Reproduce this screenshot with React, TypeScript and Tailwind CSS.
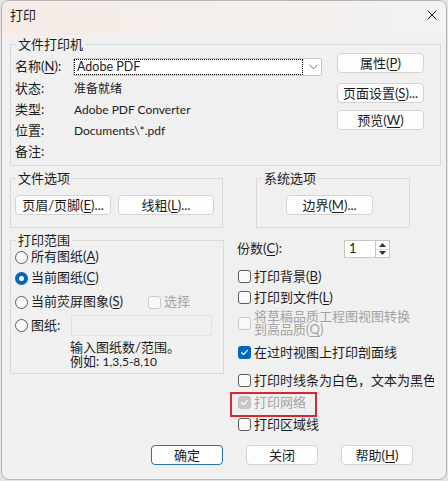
import type { ReactNode } from "react";

const FONT = "font-['Lato','Noto_Sans_CJK_SC',sans-serif]";

function U({ c }: { c: string }) {
  return <span className="underline underline-offset-[2px] decoration-[1px]">{c}</span>;
}

function Btn({ children, className = "", primary = false }: { children: ReactNode; className?: string; primary?: boolean }) {
  return (
    <div
      className={`flex h-[20px] items-center justify-center rounded-[4px] border bg-[#fdfdfd] text-[13px] leading-none text-[#1b1b1b] ${
        primary ? "border-[#2a6fb0]" : "border-[#d3d3d3]"
      } ${className}`}
    >
      {children}
    </div>
  );
}

function Check({ checked = false, disabled = false }: { checked?: boolean; disabled?: boolean }) {
  if (checked) {
    return (
      <div className={`flex h-[13px] w-[13px] shrink-0 items-center justify-center rounded-[3px] ${disabled ? "bg-[#c6c6c6]" : "bg-[#0067c0]"}`}>
        <svg width="9" height="9" viewBox="0 0 9 9" fill="none">
          <path d="M1.6 4.7 L3.6 6.6 L7.4 2.4" stroke="white" strokeWidth="1.2" strokeLinecap="round" strokeLinejoin="round" />
        </svg>
      </div>
    );
  }
  return (
    <div
      className={`h-[13px] w-[13px] shrink-0 rounded-[3px] border bg-[#f9f9f9] ${disabled ? "border-[#c9c9c9]" : "border-[#5c5c5c]"}`}
    />
  );
}

function Radio({ checked = false }: { checked?: boolean }) {
  if (checked) {
    return (
      <div className="flex h-[13px] w-[13px] shrink-0 items-center justify-center rounded-full bg-[#0067c0]">
        <div className="h-[5px] w-[5px] rounded-full bg-white" />
      </div>
    );
  }
  return <div className="h-[13px] w-[13px] shrink-0 rounded-full border border-[#5c5c5c] bg-[#f9f9f9]" />;
}

function Group({ title, className = "", children }: { title: string; className?: string; children: ReactNode }) {
  return (
    <fieldset className={`shrink-0 border border-[#d9d9d9] ${className}`}>
      <legend className="ml-[1px] px-[2px] text-[13px] leading-[16px] text-[#1b1b1b]">{title}</legend>
      {children}
    </fieldset>
  );
}

const INFO = [
  ["状态:", "准备就绪"],
  ["类型:", "Adobe PDF Converter"],
  ["位置:", "Documents\\*.pdf"],
  ["备注:", ""],
];

export default function App() {
  return (
    <div className={`h-[481px] w-[448px] bg-[#e4e4e4] ${FONT} text-[13px] text-[#1b1b1b]`}>
      <div className="ml-[1px] flex h-[480px] w-[446px] flex-col overflow-hidden rounded-[8px] border border-[#b4b4b4] bg-[#f0f0f0]">
        {/* title bar */}
        <div className="flex h-[34px] shrink-0 items-start justify-between bg-linear-to-r from-[#f7ebe5] via-[#f4efec] to-[#f2f2f2]">
          <span className="pl-[8px] pt-[6px] text-[13px] leading-[16px]">打印</span>
          <svg className="mr-[9px] mt-[9px]" width="10" height="10" viewBox="0 0 10 10">
            <path d="M0.5 0.5 L9.5 9.5 M9.5 0.5 L0.5 9.5" stroke="#1b1b1b" strokeWidth="1" />
          </svg>
        </div>

        {/* printer group */}
        <Group title="文件打印机" className="ml-[8px] mt-[1px] h-[130px] w-[431px] pl-[4px]">
          <div className="flex">
            <div className="flex w-[322px] flex-col">
              <div className="mt-[6px] flex h-[18px] items-center">
                <span className="w-[58px]">
                  名称(<U c="N" />):
                </span>
                <div className="flex h-[18px] w-[249px] items-center rounded-[2px] border border-[#c6c6c6] bg-white">
                  <div className="flex h-full w-[229px] items-center border border-dotted border-black pl-[2px] text-[12.5px]">Adobe PDF</div>
                  <svg className="ml-[6px]" width="9" height="6" viewBox="0 0 9 6">
                    <path d="M0.5 0.8 L4.5 4.8 L8.5 0.8" stroke="#6b6b6b" fill="none" strokeWidth="1" />
                  </svg>
                </div>
              </div>
              <div className="mt-[2px] flex flex-col">
                {INFO.map(([k, v]) => (
                  <div key={k} className="flex h-[21px] items-center">
                    <span className="w-[59px]">{k}</span>
                    <span className="text-[12px]">{v}</span>
                  </div>
                ))}
              </div>
            </div>
            <div className="mt-[1px] flex flex-col">
              <Btn className="w-[87px]">
                属性(<U c="P" />)
              </Btn>
              <Btn className="mt-[10px] w-[87px]">
                页面设置(<U c="S" />)...
              </Btn>
              <Btn className="mt-[7px] w-[87px]">
                预览(<U c="W" />)
              </Btn>
            </div>
          </div>
        </Group>

        {/* option groups */}
        <div className="mt-[4px] flex">
          <Group title="文件选项" className="ml-[8px] h-[58px] w-[213px] pl-[4px]">
            <div className="mt-[9px] flex">
              <Btn className="w-[96px]">
                页眉/页脚(<U c="E" />)...
              </Btn>
              <Btn className="ml-[7px] w-[96px]">
                线粗(<U c="L" />)...
              </Btn>
            </div>
          </Group>
          <Group title="系统选项" className="ml-[33px] h-[58px] w-[154px] pl-[4px]">
            <div className="mt-[9px] flex pl-[25px]">
              <Btn className="w-[87px]">
                边界(<U c="M" />)...
              </Btn>
            </div>
          </Group>
        </div>

        {/* range + right column */}
        <div className="mt-[4px] flex">
          <Group title="打印范围" className="ml-[8px] h-[142px] w-[214px] pl-[4px]">
            <div className="flex flex-col">
              <div className="flex h-[18px] items-center gap-[3px]">
                <Radio />
                <span>
                  所有图纸(<U c="A" />)
                </span>
              </div>
              <div className="mt-[3px] flex h-[18px] items-center gap-[3px]">
                <Radio checked />
                <span>
                  当前图纸(<U c="C" />)
                </span>
              </div>
              <div className="mt-[6px] flex h-[18px] items-center">
                <Radio />
                <span className="ml-[3px] w-[117px]">
                  当前荧屏图象(<U c="S" />)
                </span>
                <Check disabled />
                <span className="ml-[3px] text-[#a3a3a3]">选择</span>
              </div>
              <div className="mt-[4px] flex h-[21px] items-center">
                <Radio />
                <span className="ml-[3px] w-[40px]">图纸:</span>
                <div className="h-[21px] w-[141px] border border-[#e2e2e2] bg-[#f0f0f0]" />
              </div>
              <div className="ml-[55px] mt-[4px] flex flex-col leading-[14px]">
                <span>输入图纸数/范围。</span>
                <span>
                  例如: <span className="text-[12px]">1,3,5-8,10</span>
                </span>
              </div>
            </div>
          </Group>

          <div className="ml-[13px] flex flex-col">
            <div className="mt-[8px] flex h-[18px] items-center">
              <span className="w-[107px]">
                份数(<U c="C" />):
              </span>
              <div className="flex h-[18px] w-[46px] border border-[#c6c6c6] bg-white">
                <span className="flex w-[30px] items-center pl-[4px]">1</span>
                <div className="flex flex-1 flex-col border-l border-[#c6c6c6]">
                  <div className="flex flex-1 items-center justify-center border-b border-[#dcdcdc]">
                    <svg width="7" height="4" viewBox="0 0 7 4">
                      <path d="M0 4 L3.5 0 L7 4 Z" fill="#333" />
                    </svg>
                  </div>
                  <div className="flex flex-1 items-center justify-center">
                    <svg width="7" height="4" viewBox="0 0 7 4">
                      <path d="M0 0 L3.5 4 L7 0 Z" fill="#333" />
                    </svg>
                  </div>
                </div>
              </div>
            </div>

            <div className="ml-[1px] mt-[8px] flex flex-col">
              <div className="flex h-[21px] items-center gap-[3px]">
                <Check />
                <span>
                  打印背景(<U c="B" />)
                </span>
              </div>
              <div className="flex h-[21px] items-center gap-[3px]">
                <Check />
                <span>
                  打印到文件(<U c="L" />)
                </span>
              </div>
              <div className="mt-[2px] flex items-center gap-[3px] text-[#a3a3a3]">
                <Check disabled />
                <div className="flex flex-col leading-[13px]">
                  <span>将草稿品质工程图视图转换</span>
                  <span>
                    到高品质(<U c="Q" />)
                  </span>
                </div>
              </div>
              <div className="mt-[6px] flex h-[21px] items-center gap-[3px]">
                <Check checked />
                <span>在过时视图上打印剖面线</span>
              </div>
              <div className="mt-[7px] flex h-[21px] items-center gap-[3px]">
                <Check />
                <span className="w-[180px] overflow-hidden whitespace-nowrap">打印时线条为白色，文本为黑色</span>
              </div>
              <div className="-ml-[8px] mt-[1px] h-[25px] w-[87px] pl-[8px] outline-2 outline-offset-[-2px] outline-[#d7282c] outline-solid">
                <div className="flex h-[21px] items-center gap-[3px] text-[#a3a3a3]">
                  <Check checked disabled />
                  <span>打印网络</span>
                </div>
              </div>
              <div className="-mt-[3px] flex h-[21px] items-center gap-[3px]">
                <Check />
                <span>打印区域线</span>
              </div>
            </div>
          </div>
        </div>

        {/* bottom buttons */}
        <div className="mt-[10px] flex justify-end gap-[23px] pr-[33px]">
          <Btn primary className="w-[72px]">
            确定
          </Btn>
          <Btn className="w-[72px]">关闭</Btn>
          <Btn className="w-[72px]">
            帮助(<U c="H" />)
          </Btn>
        </div>
      </div>
    </div>
  );
}
